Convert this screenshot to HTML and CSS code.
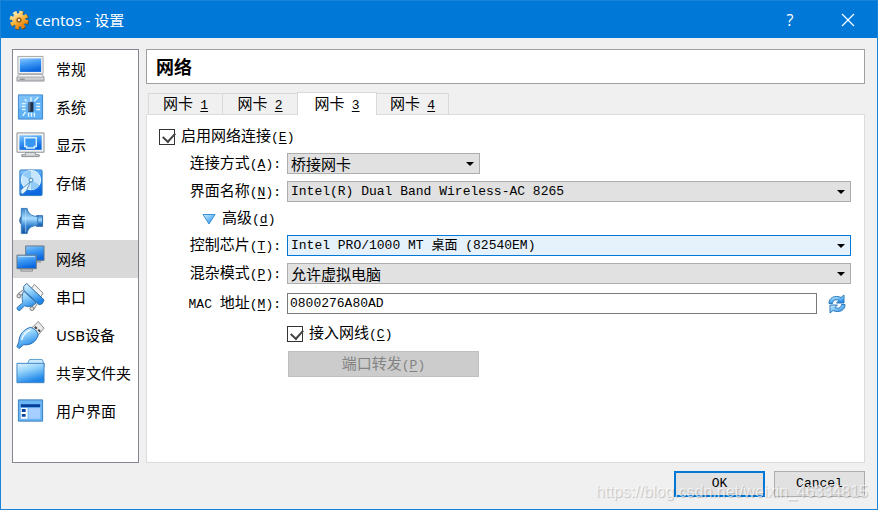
FILE: index.html
```html
<!DOCTYPE html>
<html lang="zh-CN">
<head>
<meta charset="utf-8">
<title>centos - 设置</title>
<link rel="stylesheet" href="styles.css">
</head>
<body>
<svg class="defs" aria-hidden="true">
  <defs>
    <linearGradient id="blue" x1="0" y1="0" x2="0.3" y2="1"><stop offset="0" stop-color="#8cc8fb"/><stop offset="0.45" stop-color="#3f9bf4"/><stop offset="1" stop-color="#0b67df"/></linearGradient>
    <linearGradient id="soft" x1="0" y1="0" x2="1" y2="1"><stop offset="0" stop-color="#d5f0ff"/><stop offset="0.5" stop-color="#72bdf6"/><stop offset="1" stop-color="#1f7fe0"/></linearGradient>
    <linearGradient id="folder" x1="0" y1="0" x2="0.4" y2="1"><stop offset="0" stop-color="#e6f7ff"/><stop offset="0.45" stop-color="#8fd0fb"/><stop offset="1" stop-color="#1f86e8"/></linearGradient>
    <linearGradient id="grey" x1="0" y1="0" x2="0" y2="1"><stop offset="0" stop-color="#ffffff"/><stop offset="1" stop-color="#b4b8bd"/></linearGradient>
    <linearGradient id="horn" x1="0" y1="0" x2="0" y2="1"><stop offset="0" stop-color="#3c83c8"/><stop offset="0.4" stop-color="#a5dcff"/><stop offset="0.7" stop-color="#3181d1"/><stop offset="1" stop-color="#17529f"/></linearGradient>
    <linearGradient id="gold" x1="0" y1="0" x2="0.6" y2="1"><stop offset="0" stop-color="#fff2bd"/><stop offset="0.6" stop-color="#f8b43c"/><stop offset="1" stop-color="#e8830e"/></linearGradient>
  </defs>
</svg>
<div class="window">
  <header class="titlebar">
    <svg class="app-icon" viewBox="0 0 20 20"><circle cx="10.500" cy="10.500" r="7.400" fill="none" stroke="#5c4a2c" stroke-width="4.600" stroke-dasharray="3.600 2.210"/><circle cx="10" cy="10" r="7.300" fill="none" stroke="url(#gold)" stroke-width="4" stroke-dasharray="3.500 2.230"/><circle cx="10" cy="10" r="6.800" fill="url(#gold)"/><circle cx="10" cy="10" r="2.600" fill="#8d5a18"/><circle cx="10" cy="10" r="1.200" fill="#f2eadb"/></svg>
    <h1>centos - 设置</h1>
    <button class="caption" aria-label="帮助">?</button>
    <button class="caption close" aria-label="关闭"><svg viewBox="0 0 14 14"><path d="M1 1l12 12M13 1L1 13" fill="none" stroke="#fff" stroke-width="1.2"/></svg></button>
  </header>
  <div class="body">
    <nav class="sidebar">
      <a href="#"><svg viewBox="0 0 30 30"><path d="M2 2h26v18H2z" fill="#f3f3f3" stroke="#a2a5a9"/><path d="M4 4h22v14H4z" fill="url(#blue)"/><path d="M3 20.500h24l2 3v4H1v-4z" fill="url(#grey)" stroke="#999da2"/><path d="M1 23.500h28" stroke="#aaa"/><path d="M4 25.500h5" stroke="#777"/></svg>常规</a>
      <a href="#"><svg viewBox="0 0 30 30"><path d="M2.500 2.500h25v25h-25z" fill="#5fb0f5" stroke="#3e85cc"/><path d="M3 3h24L3 17z" fill="#8fcbfb" opacity=".6"/><path d="M13 10h5v10h-5z" fill="#1d2f47"/><path d="M13 10h2v9h-2z" fill="#5c6f84"/><path d="M15.500 5v4M19 9l4-4M11 9L9 7M6 11.500h4M6 14.500h4M6 17.500h4M21 11.500h4M21 14.500h4M21 17.500h4M13 21v4M16 21v4M19 21v4M10 20l-3 4" stroke="#dff5ff" stroke-width="1.500"/></svg>系统</a>
      <a href="#"><svg viewBox="0 0 30 30"><path d="M1 2.500h28v20H1z" fill="#f1f1f1" stroke="#8c9095"/><path d="M3.500 5h23v15h-23z" fill="url(#blue)"/><path d="M9 7.500h12v9h-2v1.500h-8v-1.500H9z" fill="#3796f2" stroke="#d5efff" stroke-width="1.500"/><path d="M10 23h10v2h4v2H6v-2h4z" fill="url(#grey)" stroke="#8c9095"/></svg>显示</a>
      <a href="#"><svg viewBox="0 0 30 30"><rect x="4" y="1.500" width="23" height="26.500" rx="1" fill="url(#blue)" stroke="#337ec1"/><circle cx="15.500" cy="12" r="10" fill="#c4e5fd" stroke="#f1fbff"/><path d="M15.500 12L7 7a10 10 0 0 1 8.500-5zM15.500 12l9 5a10 10 0 0 1-9 5z" fill="#91caf4"/><circle cx="15.500" cy="12" r="2" fill="#e8f8ff" stroke="#3c83bb"/><path d="M15 13.500l-4 9-4 4-2-1v-3l3-3z" fill="#e5f5ff" stroke="#5391c5" stroke-linejoin="round"/></svg>存储</a>
      <a href="#"><svg viewBox="0 0 30 30"><path d="M5 10c-2 2-2 7 0 8z" fill="#174c8e"/><path d="M21 9.500h6.500v11H21z" fill="url(#horn)" stroke="#2c6dad"/><path d="M5.500 2h6c1 5 4 8 11 8.500v9c-7 .5-10 3-11 8.500h-6z" fill="url(#horn)" stroke="#367bbb"/><path d="M10 3v24" stroke="#cbe9ff" opacity=".6"/></svg>声音</a>
      <a href="#" class="active" aria-current="page"><svg viewBox="0 0 30 30"><path d="M10 1.500h19v15H10z" fill="url(#blue)" stroke="#67788a"/><path d="M17 17h9v2h-9z" fill="#a3a8ad"/><path d="M1 11h20v14H1z" fill="url(#blue)" stroke="#67788a"/><path d="M2.500 12.500h17" stroke="#b6e1ff"/><path d="M5 25.500h12v2H5z" fill="#ddd" stroke="#888"/></svg>网络</a>
      <a href="#"><svg viewBox="0 0 30 30"><path d="M16 6l3-4 9 9-3 5z" fill="#f2f2f2" stroke="#888" stroke-linejoin="round"/><path d="M8 9l-5 4" stroke="#888" stroke-width="4"/><path d="M8 9l-5 4" stroke="#eee" stroke-width="2"/><circle cx="3" cy="14" r="2" fill="#ddd" stroke="#777"/><path d="M21 21l-4 6" stroke="#888" stroke-width="4"/><path d="M21 21l-4 6" stroke="#eee" stroke-width="2"/><circle cx="16.500" cy="27" r="2" fill="#ddd" stroke="#777"/><path d="M8 9c-2 3-2 8-1 12l-6 5c0 2 1 3 3 3l5-5c4 2 8 1 12-3z" fill="url(#folder)" stroke="#3576ae" stroke-linejoin="round"/><path d="M8 4l3-3 18 17-2 4-3 1L8 8z" fill="url(#folder)" stroke="#25659e" stroke-linejoin="round"/></svg>串口</a>
      <a href="#"><svg viewBox="0 0 30 30"><path d="M16 8l7-7 6 7-6 7z" fill="#e9e9e9" stroke="#888" stroke-linejoin="round"/><path d="M19.500 6.500l2 2M23 9.500l2 2" stroke="#444" stroke-width="2"/><path d="M3 22c0-7 5-13 12-15 4 1 7 4 8 8-2 7-8 11-15 10l-5 4-2-2z" fill="url(#folder)" stroke="#2a6dad" stroke-linejoin="round"/><path d="M6 20c1-5 5-9 9-10" fill="none" stroke="#f0fbff" stroke-width="1.500"/></svg>USB设备</a>
      <a href="#"><svg viewBox="0 0 30 30"><path d="M12 5l2-4h13l2 4v4H12z" fill="#c9e9fd" stroke="#5c9ccb"/><path d="M1 5h28v20H1z" fill="url(#folder)" stroke="#3c84c4"/></svg>共享文件夹</a>
      <a href="#"><svg viewBox="0 0 30 30"><path d="M2.500 3.500h25v22h-25z" fill="#6cb6f5" stroke="#367dbd"/><path d="M5 8h20v3H5z" fill="#063f9b"/><path d="M5 12h7v11H5z" fill="#fff"/><path d="M13 12h12v11H13z" fill="#a6ceff"/><path d="M6 13h4v3H6zM6 18h4v3H6z" fill="#07459f"/></svg>用户界面</a>
    </nav>
    <main class="content">
      <h2>网络</h2>
      <div class="tabs" role="tablist">
        <button role="tab">网卡 <u>1</u></button>
        <button role="tab">网卡 <u>2</u></button>
        <button role="tab" aria-selected="true" class="selected">网卡 <u>3</u></button>
        <button role="tab">网卡 <u>4</u></button>
      </div>
      <section class="panel" role="tabpanel">
        <label class="check"><input type="checkbox" checked><span>启用网络连接<i>(<u>E</u>)</i></span></label>
        <div class="form">
          <label for="mode">连接方式<i>(<u>A</u>):</i></label>
          <select id="mode" class="narrow"><option>桥接网卡</option></select>
          <label for="name">界面名称<i>(<u>N</u>):</i></label>
          <select id="name" class="latin"><option>Intel(R) Dual Band Wireless-AC 8265</option></select>
          <button class="advanced"><svg viewBox="0 0 14 12"><path d="M1 1.500h12L7 11z" fill="url(#soft)" stroke="#3a91d6"/></svg><span>高级<i>(<u>d</u>)</i></span></button>
          <label for="chip">控制芯片<i>(<u>T</u>):</i></label>
          <select id="chip" class="latin hot"><option>Intel PRO/1000 MT 桌面 (82540EM)</option></select>
          <label for="mix">混杂模式<i>(<u>P</u>):</i></label>
          <select id="mix"><option>允许虚拟电脑</option></select>
          <label for="mac"><i>MAC </i>地址<i>(<u>M</u>):</i></label>
          <div class="mac">
            <input id="mac" type="text" value="0800276A80AD">
            <button class="refresh" aria-label="刷新"><svg viewBox="0 0 20 20"><path d="M2 9.500C1.500 4 8 .5 14 3.500L17 1v8H9.500l2.500-2.500C9 5 6 6 5.500 9.500z" fill="url(#folder)" stroke="#2c7ab8"/><path d="M18 10.500c.5 5.500-6 9-12 6L3 19v-8h7.500L8 13.500c3 1.500 6 .5 6.500-3z" fill="url(#soft)" stroke="#2c7ab8"/></svg></button>
          </div>
          <label class="check cable"><input type="checkbox" checked><span>接入网线<i>(<u>C</u>)</i></span></label>
          <button class="forward" disabled>端口转发<i>(<u>P</u>)</i></button>
        </div>
      </section>
    </main>
  </div>
  <footer class="actions">
    <button class="default">OK</button>
    <button>Cancel</button>
  </footer>
  <div class="watermark">https://blog.csdn.net/weixin_46334815</div>
</div>
</body>
</html>
```
FILE: styles.css
```css
* { box-sizing: border-box; }
body {
  margin: 0;
  color: #000;
  font: 15px/20px "Noto Sans CJK SC", sans-serif;
}
button, input, select { font: inherit; color: inherit; margin: 0; border-radius: 0; }
i, .tabs u, .latin, .mac input, .actions button {
  font-family: "Liberation Mono", "Noto Sans CJK SC", monospace;
  font-size: 13px;
  font-style: normal;
}
u { text-underline-offset: 2px; }
.defs { position: absolute; width: 0; height: 0; }
.window {
  position: relative;
  display: flex;
  flex-direction: column;
  min-height: 100vh;
  border: 1px solid #1883d7;
  background: #f0f0f0;
}
.titlebar {
  display: flex;
  align-items: center;
  height: 37px;
  padding-left: 8px;
  background: #0078d7;
  color: #fff;
}
.app-icon { width: 20px; height: 20px; }
h1 {
  flex: 1;
  margin: 0 0 0 6px;
  font: 15px/24px "Noto Sans", "Noto Sans CJK SC", sans-serif;
}
.caption {
  display: flex;
  align-items: center;
  justify-content: center;
  width: 58px;
  height: 36px;
  padding: 0;
  border: 0;
  background: none;
  font: 16px "Open Sans", sans-serif;
}
.caption svg { width: 14px; height: 14px; }
.body {
  flex: 1;
  display: flex;
  gap: 7px;
  padding: 11px 12px 8px 11px;
}
.sidebar {
  width: 127px;
  border: 1px solid #828790;
  background: #fff;
  font-family: "Noto Sans", "Noto Sans CJK SC", sans-serif;
}
.sidebar a {
  display: flex;
  align-items: center;
  gap: 11px;
  height: 38px;
  padding-left: 3px;
  color: #000;
  font-size: 15px;
  text-decoration: none;
  white-space: nowrap;
}
.sidebar svg { width: 29px; height: 30px; flex: none; }
.sidebar .active { background: #d9d9d9; }
.content { flex: 1; display: flex; flex-direction: column; min-width: 0; }
h2 {
  margin: 0;
  height: 35px;
  padding: 0 9px;
  border: 1px solid #a0a0a0;
  background: #fff;
  font-size: 18px;
  line-height: 33px;
}
.tabs {
  display: flex;
  align-items: flex-end;
  margin-top: 8px;
  padding-left: 2px;
}
.tabs button {
  width: 75px;
  height: 21px;
  padding: 0;
  border: 1px solid #d9d9d9;
  border-left-width: 0;
  border-bottom: 0;
  background: #f0f0f0;
  line-height: 18px;
}
.tabs button:first-child { border-left-width: 1px; }
.tabs button:last-child { width: 72px; }
.tabs .selected {
  position: relative;
  width: 80px;
  height: 23px;
  margin: 0 0 -1px -1px;
  border-left-width: 1px;
  background: #fff;
}
.tabs u { margin-left: 4px; }
.panel {
  flex: 1;
  border: 1px solid #dcdcdc;
  background: #fff;
  padding: 11px 13px;
}
.check { display: flex; align-items: center; gap: 6px; height: 21px; }
.check input {
  appearance: none;
  width: 16px;
  height: 16px;
  border: 1px solid #333;
  background: #fff;
}
.check input:checked::before {
  content: "";
  display: block;
  width: 6px;
  height: 10px;
  margin: 0 0 0 5px;
  border: solid #444;
  border-width: 0 2px 2px 0;
  transform: rotate(42deg);
}
.panel > .check { margin-left: -1px; }
.form {
  display: grid;
  grid-template-columns: 121px 1fr;
  grid-template-rows: 21px 21px 19px 21px 21px 25px 21px 26px;
  align-items: center;
  gap: 7px 6px;
  margin-top: 6px;
}
.form > label:not(.check) { text-align: right; white-space: nowrap; }
select {
  appearance: none;
  width: 100%;
  height: 21px;
  padding: 0 24px 0 3px;
  border: 1px solid #adadad;
  background: #e1e1e1 url("data:image/svg+xml,%3Csvg xmlns='http://www.w3.org/2000/svg' viewBox='0 0 8 4'%3E%3Cpath d='M0 0h8L4 4z'/%3E%3C/svg%3E") no-repeat right 5px center / 8px 4px;
  line-height: 19px;
}
.hot { border-color: #0078d7; background-color: #e5f1fb; }
.narrow { width: 193px; }
.advanced {
  grid-column: 1 / -1;
  justify-self: start;
  display: flex;
  align-items: center;
  gap: 6px;
  height: 19px;
  margin-left: 42px;
  padding: 0;
  border: 0;
  background: none;
}
.advanced svg { width: 14px; height: 12px; }
.mac { display: flex; align-items: center; gap: 10px; }
.mac input {
  flex: 1;
  min-width: 0;
  height: 21px;
  padding: 0 2px;
  border: 1px solid #7a7a7a;
}
.refresh { width: 20px; height: 20px; margin-right: 4px; padding: 0; border: 0; background: none; }
.refresh svg { display: block; width: 20px; height: 20px; }
.cable, .forward { grid-column: 2; }
.forward {
  width: 191px;
  height: 26px;
  margin-left: 1px;
  padding: 0;
  border: 1px solid #bfbfbf;
  background: #ccc;
  color: #838383;
}
.actions {
  display: flex;
  justify-content: flex-end;
  gap: 9px;
  padding: 0 12px 12px;
}
.actions button {
  width: 91px;
  height: 26px;
  padding: 0;
  border: 1px solid #adadad;
  background: #e1e1e1;
}
.actions .default { border: 2px solid #0078d7; }
.watermark {
  position: absolute;
  right: 9px;
  bottom: 6px;
  color: rgba(255, 255, 255, 0.65);
  font: 16px/22px "Liberation Sans", sans-serif;
  text-shadow: 1px 1px 1px rgba(0, 0, 0, 0.2);
  pointer-events: none;
}
```
